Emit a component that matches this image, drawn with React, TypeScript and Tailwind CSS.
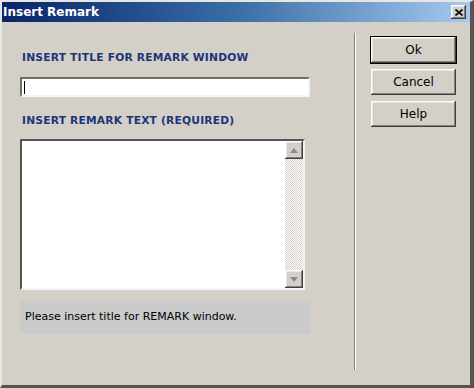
const raised =
  'shadow-[inset_-1px_-1px_#404040,inset_1px_1px_#ffffff,inset_-2px_-2px_#808080,inset_2px_2px_#e8e6e0]'

function Button({ label, isDefault }: { label: string; isDefault?: boolean }) {
  return (
    <button
      className={`w-[85px] h-[26px] bg-[#d4d0c8] text-[12px] text-black flex items-center justify-center ${raised} ${
        isDefault ? 'outline outline-1 outline-black' : ''
      }`}
    >
      {label}
    </button>
  )
}

function ArrowBtn({ up }: { up?: boolean }) {
  return (
    <div className={`w-[18px] h-[18px] bg-[#d4d0c8] flex items-center justify-center ${raised}`}>
      <svg width="8" height="5" viewBox="0 0 8 5">
        {up ? <polygon points="0,5 8,5 4,0" fill="#8a8a8a" /> : <polygon points="0,0 8,0 4,5" fill="#8a8a8a" />}
      </svg>
    </div>
  )
}

export default function App() {
  return (
    <div className="w-[474px] h-[388px] bg-[#d4d0c8] font-['DejaVu_Sans',sans-serif] flex flex-col border-l-2 border-t-2 border-r-[4px] border-b-[3px] border-l-[#e8e6e0] border-t-[#e8e6e0] border-r-[#555] border-b-[#555]">
      <div className="h-[20px] flex items-center justify-between pr-[2px] bg-gradient-to-r from-[#0a246a] via-[#3a6ea5] to-[#a6caf0]">
        <span className="text-white font-bold text-[12px] pl-[1px]">Insert Remark</span>
        <div className={`w-[15px] h-[14px] bg-[#d4d0c8] flex items-center justify-center mr-[2px] ${raised}`}>
          <svg width="8" height="7" viewBox="0 0 8 7">
            <path d="M0.5 0.5 L7.5 6.5 M7.5 0.5 L0.5 6.5" stroke="#000" strokeWidth="1.6" />
          </svg>
        </div>
      </div>

      <div className="flex flex-1">
        <div className="ml-[18px] w-[290px] flex flex-col">
          <div className="mt-[29px] h-[13px] pl-[2px] text-[10.7px] font-bold text-[#1c3578] leading-[13px] tracking-[0.2px]">
            INSERT TITLE FOR REMARK WINDOW
          </div>
          <div className="mt-[13px] h-[20px] bg-white border-2 border-t-[#6e6e6e] border-l-[#6e6e6e] border-b-[#f4f4f4] border-r-[#f4f4f4] flex items-center pl-[2px]">
            <div className="w-[1px] h-[13px] bg-black" />
          </div>
          <div className="mt-[17px] h-[13px] pl-[2px] text-[10.7px] font-bold text-[#1c3578] leading-[13px] tracking-[0.2px]">
            INSERT REMARK TEXT (REQUIRED)
          </div>
          <div className="mt-[12px] w-[285px] h-[151px] bg-white border-2 border-t-[#555] border-l-[#555] border-b-[#f4f4f4] border-r-[#f4f4f4] flex justify-end">
            <div className="w-[18px] h-full flex flex-col justify-between bg-[repeating-conic-gradient(#ffffff_0_25%,#d4d0c8_0_50%)] bg-[length:2px_2px]">
              <ArrowBtn up />
              <ArrowBtn />
            </div>
          </div>
          <div className="mt-[11px] h-[33px] bg-[#cacaca] flex items-center pl-[5px] text-[11px] text-black">
            Please insert title for REMARK window.
          </div>
        </div>

        <div className="ml-[44px] mt-[11px] h-[337px] w-[2px] border-l border-l-[#808080] border-r border-r-white" />

        <div className="ml-[15px] mt-[15px] flex flex-col gap-[6px]">
          <Button label="Ok" isDefault />
          <Button label="Cancel" />
          <Button label="Help" />
        </div>
      </div>
    </div>
  )
}
